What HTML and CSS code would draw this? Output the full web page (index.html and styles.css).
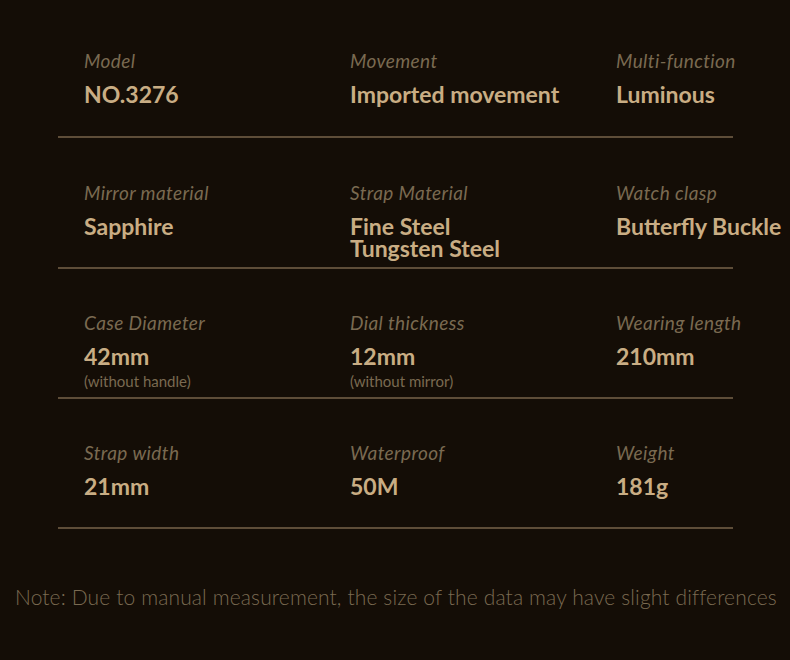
FILE: index.html
```html
<!DOCTYPE html>
<html>
<head>
<meta charset="utf-8">
<link rel="stylesheet" href="styles.css">
</head>
<body>
<div class="page">
  <div class="specs">
    <div class="row row-first">
      <div class="cell"><div class="label">Model</div><div class="value">NO.3276</div></div>
      <div class="cell"><div class="label">Movement</div><div class="value">Imported movement</div></div>
      <div class="cell"><div class="label">Multi-function</div><div class="value">Luminous</div></div>
    </div>
    <div class="row row-second">
      <div class="cell"><div class="label">Mirror material</div><div class="value">Sapphire</div></div>
      <div class="cell"><div class="label">Strap Material</div><div class="value">Fine Steel<br>Tungsten Steel</div></div>
      <div class="cell"><div class="label">Watch clasp</div><div class="value">Butterfly Buckle</div></div>
    </div>
    <div class="row row-tight">
      <div class="cell"><div class="label">Case Diameter</div><div class="value">42mm</div><div class="sub">(without handle)</div></div>
      <div class="cell"><div class="label">Dial thickness</div><div class="value">12mm</div><div class="sub">(without mirror)</div></div>
      <div class="cell"><div class="label">Wearing length</div><div class="value">210mm</div></div>
    </div>
    <div class="row row-tight">
      <div class="cell"><div class="label">Strap width</div><div class="value">21mm</div></div>
      <div class="cell"><div class="label">Waterproof</div><div class="value">50M</div></div>
      <div class="cell"><div class="label">Weight</div><div class="value">181g</div></div>
    </div>
  </div>
  <p class="note">Note: Due to manual measurement, the size of the data may have slight differences</p>
</div>
</body>
</html>
```
FILE: styles.css
```css
html, body {
  margin: 0;
  padding: 0;
  background: #140d06;
}
body {
  width: 790px;
  height: 660px;
  overflow: hidden;
  font-family: "Lato", "Noto Sans", sans-serif;
}
.page {
  padding-top: 5px;
}
.specs {
  margin-left: 58px;
  width: 675px;
}
.row {
  display: grid;
  grid-template-columns: 266px 266px 143px;
  padding: 45px 0 0 26px;
  height: 84px;
  border-bottom: 2px solid #5e4d38;
}
.row-first {
  height: 86px;
}
.row-second {
  padding-top: 44px;
  height: 85px;
}
.row-tight {
  padding-top: 43px;
  height: 85px;
}
.cell {
  white-space: nowrap;
}
.label {
  font-size: 19px;
  font-style: italic;
  letter-spacing: 0.4px;
  line-height: 22px;
  color: #7a6a51;
}
.value {
  margin-top: 11px;
  font-size: 23px;
  font-weight: 700;
  line-height: 22px;
  color: #c9ad84;
}
.sub {
  margin-top: 5px;
  font-size: 15px;
  line-height: 18px;
  color: #7a6a51;
}
.note {
  margin: 56px 0 0 15px;
  font-size: 21px;
  font-weight: 300;
  letter-spacing: 0.13px;
  line-height: 24px;
  color: #7a6a51;
  white-space: nowrap;
}
```
